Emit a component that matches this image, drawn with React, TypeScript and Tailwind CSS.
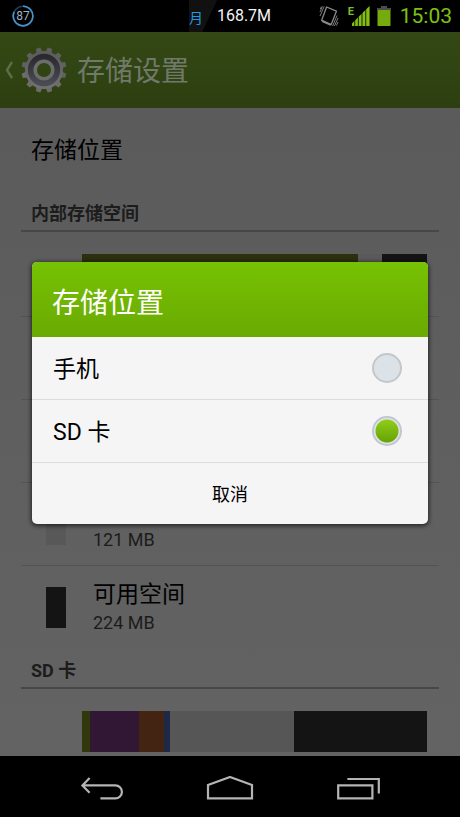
import { useState } from "react";

type Segment = { size: number; tone: string };
type StorageRow = { title?: string; size?: string; swatch: string };

const internalUsage: Segment[] = [
  { size: 276, tone: "bg-[#2b300f]" },
  { size: 24, tone: "bg-[#5a5a5a]" },
  { size: 45, tone: "bg-[#141414]" },
];

const cardUsage: Segment[] = [
  { size: 8, tone: "bg-[#31380b]" },
  { size: 49, tone: "bg-[#321734]" },
  { size: 25, tone: "bg-[#432412]" },
  { size: 6, tone: "bg-[#1e2848]" },
  { size: 124, tone: "bg-[#565656]" },
  { size: 133, tone: "bg-[#141414]" },
];

const internalRows: StorageRow[] = [
  { swatch: "bg-[#2b300f]" },
  { swatch: "bg-[#2b300f]" },
  { size: "121 MB", swatch: "bg-[#585858]" },
  { title: "可用空间", size: "224 MB", swatch: "bg-[#141414]" },
];

const teeth = Array.from({ length: 12 }, (_, i) => i * 30);

function GearIcon() {
  return (
    <svg viewBox="0 0 46 46" className="size-[46px]" aria-hidden="true">
      <defs>
        <linearGradient id="gearBody" x1="0" y1="0" x2="0" y2="1">
          <stop offset="0" stopColor="#5c5c5c" />
          <stop offset="1" stopColor="#707070" />
        </linearGradient>
        <linearGradient id="gearRing" x1="0" y1="0" x2="0" y2="1">
          <stop offset="0" stopColor="#29292f" />
          <stop offset="1" stopColor="#4a4a52" />
        </linearGradient>
      </defs>
      {teeth.map((angle) => (
        <path key={angle} d="M19.8 6 L20.8 0.4 H25.2 L26.2 6 Z" fill={angle > 90 && angle < 270 ? "#6c6c6c" : "#5f5f5f"} transform={`rotate(${angle + 15} 23 23)`} />
      ))}
      <circle cx="23" cy="23" r="17.2" fill="none" stroke="url(#gearBody)" strokeWidth="3.6" />
      <circle cx="23" cy="23" r="13.2" fill="none" stroke="url(#gearRing)" strokeWidth="6" />
      <circle cx="23" cy="23" r="8.8" fill="none" stroke="#6c6c6c" strokeWidth="3.6" />
    </svg>
  );
}

function StatusBar() {
  return (
    <header className="grid h-8 shrink-0 grid-cols-[1fr_auto_1fr] items-center bg-black">
      <div className="relative ml-3 size-[22px]">
        <svg viewBox="0 0 22 22" className="absolute inset-0" fill="none" aria-hidden="true">
          <circle cx="11" cy="11" r="9.8" stroke="#1d3c52" strokeWidth="1.6" />
          <path d="M11 1.2A9.8 9.8 0 1 1 2.2 6.8" stroke="#4596cc" strokeWidth="1.6" />
        </svg>
        <span className="relative block text-center text-xs leading-[22px] text-[#9fb4c4]">87</span>
      </div>
      <div className="flex items-center">
        <span className="h-8 w-7 bg-[linear-gradient(115deg,#111_65%,#000_66%)] pt-0.5 text-sm leading-8 text-[#1a9be6]">月</span>
        <span className="text-base leading-8 text-[#f4f4f4]">168.7M</span>
      </div>
      <div className="flex items-center justify-end pr-2">
        <svg viewBox="0 0 20 24" className="mr-[9px] h-6 w-5" fill="none" stroke="#8a8a8a" aria-hidden="true">
          <path d="M7.6 3 L17.4 7.2 L12.2 20.6 L2.6 16.4 Z" strokeWidth="1.3" strokeLinejoin="round" />
          <path d="M3.2 17 L11.8 20.8" strokeWidth="2" />
          <path d="M1 8 L3.4 2.4 M1 12 L5.2 2.4 M1.4 5 L2.4 2.6 M19 14 L15.4 22 M19 18 L17.4 21.6 M18 11.6 L13.6 22" strokeWidth="0.9" />
        </svg>
        <span className="relative mr-[7px] block h-5 w-[22px]">
          <span className="absolute left-0 top-0 text-[11px] font-bold leading-[11px] text-[#7dbb2e]">E</span>
          <svg viewBox="0 0 22 20" className="h-5 w-[22px]" fill="#84bd12" aria-hidden="true">
            <path d="M4 20V17.4L6.4 15V20Z M7.2 20V14.2L9.9 11.5V20Z M10.7 20V10.7L13.6 7.8V20Z M14.4 20V7L17.4 4V20Z M18.2 20V3.2L21.6 0V20Z" />
          </svg>
        </span>
        <svg viewBox="0 0 14 20" className="mr-[9px] h-5 w-3.5" aria-hidden="true">
          <path d="M4 0H10V2H14V4H0V2H4Z" fill="#4c4c4c" />
          <path d="M0.5 4H13.5V20H0.5Z" fill="#76ab10" />
        </svg>
        <time className="text-[21px] leading-8 text-[#7fc012]">15:03</time>
      </div>
    </header>
  );
}

function SectionTitle({ children }: { children: string }) {
  return (
    <h2 className="h-[41px] border-b-2 border-[#474747] pt-0.5 pl-2.5 text-lg leading-[41px] font-bold text-[#1c1c1c]">
      {children}
    </h2>
  );
}

function UsageBar({ segments }: { segments: Segment[] }) {
  return (
    <div className="mt-[22px] mr-3 ml-[61px] flex h-[41px]">
      {segments.map((s, i) => (
        <span key={i} className={s.tone} style={{ flexGrow: s.size, flexBasis: 0 }} />
      ))}
    </div>
  );
}

function NavBar() {
  const button = "flex h-full w-32 items-center justify-center pt-1";
  return (
    <nav className="flex h-[61px] shrink-0 justify-center bg-black">
      <button type="button" aria-label="返回" className={button}>
        <svg viewBox="0 0 44 26" className="h-[26px] w-11" fill="none" stroke="#b4b4b4" strokeWidth="2.2">
          <path d="M9.6 2 L2.4 9.4 L9.6 16.8 M2.4 9.4 H35.4 A6.5 6.5 0 0 1 35.4 22.4 H20.4" />
        </svg>
      </button>
      <button type="button" aria-label="主屏幕" className={button}>
        <svg viewBox="0 0 48 26" className="h-[26px] w-12" fill="none" stroke="#b4b4b4" strokeWidth="2.2">
          <path d="M2 22.4 V9 L24 1 L46 9 V22.4 Z" />
        </svg>
      </button>
      <button type="button" aria-label="最近任务" className={button}>
        <svg viewBox="0 0 44 26" className="h-[26px] w-11" fill="none" stroke="#b4b4b4" strokeWidth="2.2">
          <path d="M2.2 9.4 H36.4 V22.4 H2.2 Z M11.4 3 H42.8 V17.4" />
        </svg>
      </button>
    </nav>
  );
}

export default function App() {
  const [place, setPlace] = useState("card");
  const options = [
    { id: "phone", label: "手机" },
    { id: "card", label: "SD 卡" },
  ];

  return (
    <div className="flex h-screen flex-col overflow-hidden bg-black font-[Roboto,'Noto_Sans_CJK_SC',sans-serif]">
      <StatusBar />
      <div className="relative flex min-h-0 flex-1 flex-col overflow-hidden bg-linear-to-b from-[#5a5a5a] to-[#636363]">
        <div className="flex h-[76px] shrink-0 items-center bg-linear-to-b from-[#344815] to-[#2d3f10] pl-1">
          <button type="button" aria-label="返回" className="flex items-center gap-2">
            <svg viewBox="0 0 9 18" className="h-[18px] w-[9px]" fill="none" stroke="#5c6e45" strokeWidth="2.4" aria-hidden="true">
              <path d="M8 1 L3 9 L8 17" />
            </svg>
            <GearIcon />
          </button>
          <h1 className="ml-2.5 pt-1 text-[28px] text-[#70796a]">存储设置</h1>
        </div>

        <main className="px-[21px]">
          <button type="button" className="block h-[83px] w-full pt-1 pl-2.5 text-left text-[23px] text-black">
            存储位置
          </button>

          <SectionTitle>内部存储空间</SectionTitle>
          <div className="flow-root h-[85px] border-b border-[#535353]">
            <UsageBar segments={internalUsage} />
          </div>
          <ul className="divide-y divide-[#535353]">
            {internalRows.map((row, i) => (
              <li key={i} className="box-content flex h-[82px] items-center gap-[27px] pl-[25px]">
                <span className={`h-[41px] w-5 ${row.swatch}`} />
                <div className="pt-1 leading-7">
                  <div className="h-7 text-[23px] leading-7 text-black">{row.title}</div>
                  <div className="h-7 text-lg leading-7 text-[#1c1c1c]">{row.size}</div>
                </div>
              </li>
            ))}
          </ul>

          <SectionTitle>SD 卡</SectionTitle>
          <UsageBar segments={cardUsage} />
        </main>

        <div className="absolute inset-0 flex items-center px-8 pb-0.5">
          <form
            role="dialog"
            aria-labelledby="dialog-title"
            className="w-full overflow-hidden rounded-[5px] bg-[#f5f5f5] shadow-[0_1px_4px_1px_rgba(0,0,0,0.6)]"
          >
            <h2
              id="dialog-title"
              className="flex h-[75px] items-center bg-linear-to-b from-[#76c203] to-[#6aaa02] pt-2 pl-5 text-[28px] text-white"
            >
              存储位置
            </h2>
            {options.map((o) => (
              <label
                key={o.id}
                className="flex h-[63px] items-center justify-between border-b border-[#dcdcdc] pr-[26px] pl-[21px] text-[23px] text-black"
              >
                <span className="pt-1">{o.label}</span>
                <input
                  type="radio"
                  name="place"
                  checked={place === o.id}
                  onChange={() => setPlace(o.id)}
                  className="size-[30px] appearance-none rounded-full border-2 border-[#c3c7ca] bg-[#dbe2e8] checked:border-[#c2c6d2] checked:bg-[radial-gradient(circle,transparent_11px,#dfe5e4_12px),linear-gradient(#93d01a,#63a004)]"
                />
              </label>
            ))}
            <button type="button" className="block h-[61px] w-full pt-0.5 text-lg text-black">
              取消
            </button>
          </form>
        </div>
      </div>
      <NavBar />
    </div>
  );
}
